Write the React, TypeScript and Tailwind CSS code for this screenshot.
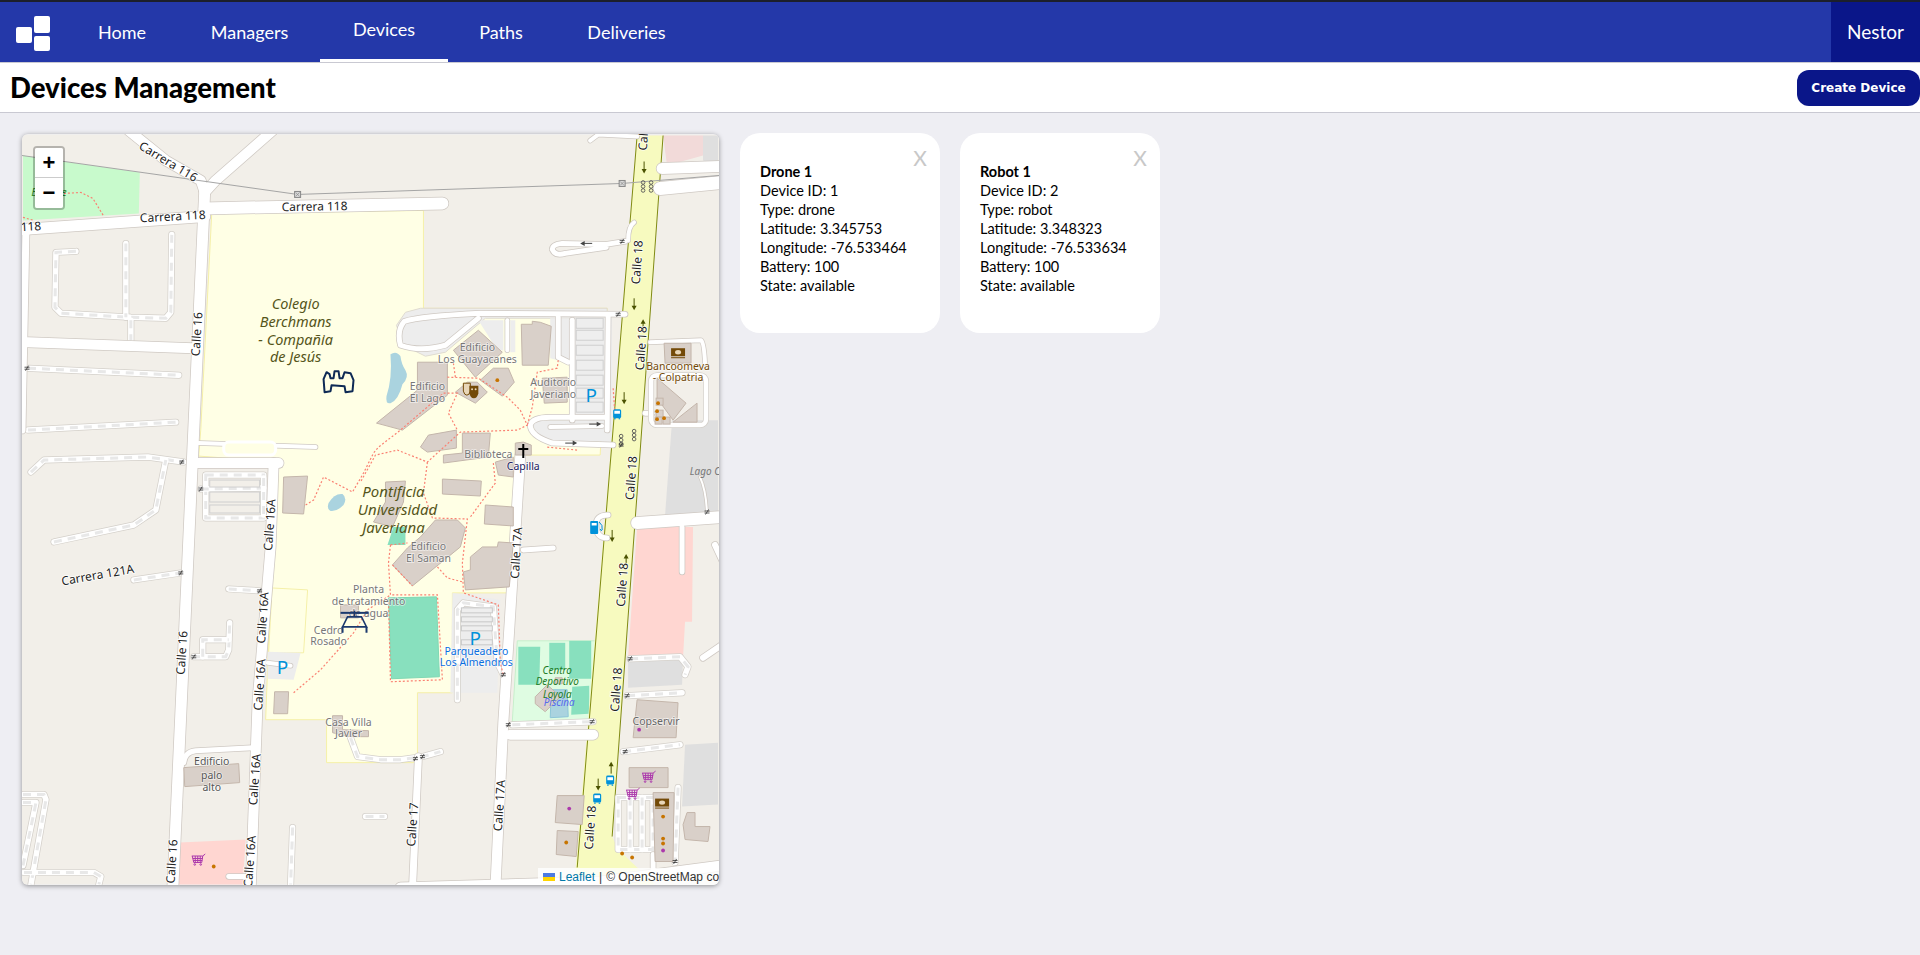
import { Fragment } from "react";

// map geometry is written in page pixels, the viewBox takes care of the offset
const areas: [string, string, string?][] = [
  ["22,155 139,172 138,213 22,220", "#c8facc"],
  ["211,213 423,210 423,308 607,308 600,455 523,455 510,593 452,593 452,693 417,693 417,763 326,763 326,720 265,720 270,588 307,590 303,653 268,653 278,462 198,456 200,430", "#ffffe5", "#f5f0a8"],
  ["179,843 245,840 242,885 176,885", "#ffd6d1"],
  ["663,135 703,135 703,155 667,165", "#f2dad9"],
  ["637,527 693,527 692,622 685,622 683,657 628,657", "#ffd6d1"],
  ["672,420 718,420 718,513 665,515", "#dfdfdf"],
  ["685,745 718,743 718,805 682,807", "#dfdfdf"],
  ["628,662 683,660 682,685 628,688", "#dfdfdf"],
  ["703,135 718,135 718,165 703,160", "#dfdfdf"],
  ["517,641 599,641 593,720 512,722", "#dffce2", "#c8efcc"],
  ["452,593 500,600 497,693 450,693", "#ededed"],
  ["267,652 300,653 293,680 267,679", "#ededed"],
  ["396,325 405,312 420,308 607,308 607,318 485,318 445,352 425,356 403,345", "#ededed", "#e0dcd0"],
  ["478,320 503,320 503,350 497,350", "#ededed"],
  ["510,320 515,320 515,352 510,352", "#ededed"],
  ["550,318 612,318 612,425 570,425 570,363 550,358", "#ededed"],
  ["530,420 612,420 612,442 540,440", "#ededed"],
  ["518,647 540,647 539,685 518,685", "#88e0be"],
  ["549,643 565,643 565,670 549,670", "#88e0be"],
  ["569,641 591,641 591,679 569,679", "#88e0be"],
  ["572,687 589,686 589,714 571,715", "#88e0be"],
  ["388,598 436,597 439,677 391,679", "#88e0be", "#7fd8b4"],
  ["385,482 405,481 403,502 392,527 373,522 385,502", "#d9d0c9", "#c4b6ab"],
  ["393,527 405,527 405,545 387,545", "#88e0be"],
  ["551,690 567,690 568,717 550,718", "#aad3df", "#8ec6d8"],
];

const buildings = [
  "521,324 532,324 532,321 540,322 551,326 548,365 522,365",
  "453,350 478,330 502,352 475,377",
  "480,380 493,368 508,368 514,382 502,396",
  "455,392 467,382 477,382 487,392 475,403",
  "417,362 447,362 447,395 402,430 376,423 417,390",
  "542,378 567,377 567,402 544,403",
  "664,343 691,343 691,363 665,363",
  "657,378 686,403 673,420 657,398",
  "673,422 697,403 697,422",
  "428,435 456,430 456,448 427,452 420,447",
  "462,433 490,433 488,457 443,463 443,455 462,453",
  "495,462 513,457 513,477 498,475",
  "442,479 481,481 480,496 442,494",
  "485,505 513,507 513,526 484,524",
  "407,548 420,537 435,520 457,520 465,528 460,547 412,586 392,565",
  "470,557 482,547 497,547 498,542 513,543 509,587 465,590 463,572 470,570",
  "515,443 523,442 531,445 531,455 515,455",
  "637,700 678,703 676,738 633,738",
  "629,768 668,768 668,788 629,788",
  "557,796 584,796 582,825 555,823",
  "557,831 578,832 576,857 556,855",
  "653,793 674,793 673,862 655,862",
  "687,813 695,813 695,827 710,827 708,842 685,840 683,825",
  "183,768 238,764 239,783 184,787",
  "332,716 342,716 342,730 368,731 368,737 348,737 332,733",
  "283,477 307,476 303,514 282,513",
  "274,692 288,692 287,714 273,714",
  "535,697 547,685 560,697 545,712 535,704",
  "555,678 562,678 562,684 555,684",
  "340,605 358,605 358,618 340,618",
];

// [d, width]
const roads: [string, number][] = [
  ["M204 190 L193 430 L172 890", 11],
  ["M128 130 L165 160 L200 180 L204 192", 10],
  ["M272 130 L215 180 L204 192", 10],
  ["M21 229 L204 216", 11],
  ["M204 208 L442 203", 12],
  ["M27 342 L192 348", 10],
  ["M25 228 L21 430", 7],
  ["M193 463 L278 463", 10],
  ["M273 463 L270 547 L257 700 L250 890", 10],
  ["M520 455 L503 723 L495 890", 10],
  ["M418 757 L412 890", 7],
  ["M510 735 L593 735", 10],
  ["M400 888 L600 882 L722 866", 10],
  ["M662 168 L722 166", 11],
  ["M660 188 L722 182", 13],
  ["M637 523 L722 517", 12],
  ["M682 527 L682 572", 5],
  ["M715 545 L722 560", 6],
  ["M703 658 L722 645", 6],
  ["M590 140 L598 134 L637 136", 4],
  ["M608 515 Q595 515 596 526 Q596 538 607 538", 5],
  ["M650 342 L701 340 Q704 342 705 363", 4],
  ["M645 413 L652 413", 5],
  ["M523 550 L553 548", 5],
  ["M183 763 Q184 752 195 751 L252 748", 5],
  ["M228 877 L245 877", 5],
  ["M267 663 L290 666", 4],
  ["M198 443 L315 447", 4],
  ["M628 240 Q628 226 634 222", 4],
  ["M625 241 L606 244 L562 243 Q552 244 552 249 Q555 256 565 253 L606 247", 5],
  ["M625 314 L480 313 Q420 316 404 321 Q396 330 400 345 Q420 352 445 345 L478 318", 5],
  ["M572 320 L572 420", 5],
  ["M608 315 L607 430", 5],
  ["M558 317 L558 357 L568 362", 5],
  ["M507 320 L507 350", 4],
  ["M613 445 L552 443 Q530 436 530 425 Q532 417 550 417 L605 417", 5],
  ["M550 427 L602 426", 4],
  ["M653 855 L653 873", 5],
  ["M700 477 Q706 490 707 513", 2],
];

const service = [
  "M75 251 L55 252 L54 307 L60 313 L130 317 L165 318 L170 312 L171 234",
  "M125 243 L125 317",
  "M130 320 L130 340",
  "M27 368 L178 375",
  "M27 430 L175 422",
  "M30 472 L43 460 L147 457 L183 462",
  "M53 542 L133 525 L155 510 L165 460",
  "M133 580 L180 573",
  "M205 475 L263 475 L263 518 L205 518 Z",
  "M200 489 L263 488",
  "M228 589 L260 591",
  "M193 657 L225 657 L228 650 L229 623",
  "M202 657 L202 640 L228 640",
  "M22 795 L43 795 L45 800 L30 885",
  "M22 803 L35 803 L22 866",
  "M23 873 L93 873 L100 877 L98 885",
  "M292 828 L290 885",
  "M365 817 L384 817",
  "M350 738 L357 757 L380 760 L400 760 L422 757 L440 752",
  "M457 700 L457 610 L463 603 L493 607 L497 663 L503 675",
  "M512 725 L593 722",
  "M630 659 L680 657 L688 667 L685 675",
  "M627 696 L682 693",
  "M623 752 L680 745",
  "M618 798 L653 798 L653 850 L618 850 Z",
  "M630 798 L630 850",
  "M642 798 L642 850",
  "M678 788 L675 863",
  "M263 478 L263 515",
];

const paths = [
  "M22 217 L33 220 M63 193 L80 192 L92 198 L103 216",
  "M305 505 L313 500 L323 477 L352 492 L363 473 L373 453 L378 447 L400 430 L443 393 L457 393 L448 413 L457 430",
  "M447 377 L478 378 L507 397 L520 410 L527 425 L517 430 L460 432 L427 462 L397 450 L375 455 L360 482",
  "M427 462 L423 493 L432 518 L467 519 L462 563 L463 593 L498 605 L500 663 L503 675",
  "M493 463 L495 483 L470 517",
  "M390 545 L407 543 M390 545 L388 563 L390 595 L437 595 L442 680 L390 682 L388 600",
  "M392 565 L412 586 M437 567 L447 578 L462 582",
  "M293 693 L320 670 L353 633 L367 610 L390 595",
  "M453 363 L455 377",
  "M558 360 L557 368 L537 372 L532 407 L527 425",
  "M613 388 L615 417",
  "M547 447 L577 450",
];

type Label = { t: string; x: number; y: number; r?: number; c?: string; i?: boolean; s?: number };

const road = (t: string, x: number, y: number, r = -86): Label => ({ t, x, y, r });

const labels: Label[] = [
  road("Carrera 116", 167, 162, 31),
  road("Carrera 118", 172, 217, -3),
  road("Carrera 118", 314, 207, -1),
  road("118", 30, 227, -3),
  road("Calle 16", 197, 334),
  road("Calle 16", 182, 653),
  road("Calle 16", 172, 862),
  road("Calle 16A", 270, 525),
  road("Calle 16A", 263, 618),
  road("Calle 16A", 260, 685),
  road("Calle 16A", 255, 780),
  road("Calle 16A", 250, 862),
  road("Calle 18", 645, 128),
  road("Calle 18", 638, 262),
  road("Calle 18", 642, 348),
  road("Calle 18", 632, 478),
  road("Calle 18", 623, 585),
  road("Calle 18", 617, 690),
  road("Calle 18", 591, 828),
  road("Calle 17A", 517, 553),
  road("Calle 17A", 500, 806),
  road("Calle 17", 413, 825),
  road("Carrera 121A", 97, 576, -10),
  { t: "Colegio", x: 295, y: 305, c: "#55551a", i: true, s: 14.5 },
  { t: "Berchmans", x: 295, y: 323, c: "#55551a", i: true, s: 14.5 },
  { t: "- Compañia", x: 295, y: 341, c: "#55551a", i: true, s: 14.5 },
  { t: "de Jesús", x: 295, y: 358, c: "#55551a", i: true, s: 14.5 },
  { t: "Pontificia", x: 393, y: 493, c: "#55551a", i: true, s: 15 },
  { t: "Universidad", x: 397, y: 511, c: "#55551a", i: true, s: 15 },
  { t: "Javeriana", x: 393, y: 529, c: "#55551a", i: true, s: 15 },
  { t: "Edificio", x: 477, y: 348, c: "#777" },
  { t: "Los Guayacanes", x: 477, y: 360, c: "#777" },
  { t: "Edificio", x: 427, y: 387, c: "#777" },
  { t: "El Lago", x: 427, y: 399, c: "#777" },
  { t: "Auditorio", x: 553, y: 383, c: "#777" },
  { t: "Javeriano", x: 553, y: 395, c: "#777" },
  { t: "Biblioteca", x: 488, y: 455, c: "#777" },
  { t: "Capilla", x: 523, y: 467, c: "#20205f" },
  { t: "Edificio", x: 428, y: 547, c: "#777" },
  { t: "El Saman", x: 428, y: 559, c: "#777" },
  { t: "Planta", x: 368, y: 590, c: "#777" },
  { t: "de tratamiento", x: 368, y: 602, c: "#777" },
  { t: "de agua", x: 368, y: 614, c: "#777" },
  { t: "Cedro", x: 328, y: 631, c: "#777" },
  { t: "Rosado", x: 328, y: 642, c: "#777" },
  { t: "Parqueadero", x: 476, y: 652, c: "#0a6fe0" },
  { t: "Los Almendros", x: 476, y: 663, c: "#0a6fe0" },
  { t: "Centro", x: 557, y: 672, c: "#1b7b25", i: true, s: 10 },
  { t: "Deportivo", x: 557, y: 683, c: "#1b7b25", i: true, s: 10 },
  { t: "Loyola", x: 557, y: 696, c: "#1b7b25", i: true, s: 10 },
  { t: "Piscina", x: 559, y: 704, c: "#5768ec", i: true, s: 10 },
  { t: "Copservir", x: 656, y: 722, c: "#666" },
  { t: "Bancoomeva", x: 678, y: 367, c: "#734a08" },
  { t: "- Colpatria", x: 678, y: 378, c: "#734a08" },
  { t: "Lago Club", x: 712, y: 472, c: "#777", i: true, s: 10 },
  { t: "Casa Villa", x: 348, y: 723, c: "#777" },
  { t: "Javier", x: 348, y: 735, c: "#777" },
  { t: "Edificio", x: 211, y: 763, c: "#555" },
  { t: "palo", x: 211, y: 777, c: "#555" },
  { t: "alto", x: 211, y: 789, c: "#555" },
  { t: "Bosque", x: 48, y: 193, c: "#2b8a2b", i: true, s: 11 },
];

const gates: [number, number][] = [
  [181, 462], [200, 489], [180, 573], [259, 591], [193, 657], [508, 725], [592, 722],
  [630, 659], [627, 696], [503, 675], [707, 512], [622, 241], [618, 314], [621, 445],
  [26, 368], [625, 752], [675, 862], [415, 759], [422, 757],
];

const arrows: [number, number, number][] = [
  [644, 167, 90], [634, 304, 90], [643, 325, -90], [624, 398, 90], [612, 536, 90],
  [626, 560, -90], [598, 785, 90], [611, 768, -90], [586, 243, 180], [595, 424, 0], [571, 443, 0],
];

const dots: [number, number, string][] = [
  [497, 380, "#c77400"], [658, 403, "#c77400"], [657, 411, "#c77400"], [664, 418, "#c77400"], [657, 419, "#c77400"],
  [213, 867, "#c77400"], [566, 843, "#c77400"], [622, 854, "#c77400"], [632, 858, "#c77400"],
  [663, 817, "#c77400"], [663, 839, "#c77400"], [663, 844, "#c77400"], [663, 851, "#ac39ac"],
  [639, 730, "#ac39ac"], [569, 809, "#ac39ac"],
];

function Cart({ x, y }: { x: number; y: number }) {
  return (
    <g transform={`translate(${x - 7} ${y - 6})`} fill="none" stroke="#ac39ac" strokeWidth="1">
      <path d="M0 1.5 H11 L13.5 -0.5 M0.5 1.5 L2 8 H10 L11 1.5 M1 4 H11 M1.5 6 H10.5 M3.5 1.5 V8 M6 1.5 V8 M8.5 1.5 V8" />
      <circle cx="3" cy="10" r="0.8" />
      <circle cx="9" cy="10" r="0.8" />
    </g>
  );
}

function Bus({ x, y }: { x: number; y: number }) {
  return (
    <g transform={`translate(${x - 4} ${y - 5})`}>
      <rect width="8" height="9" rx="1.5" fill="#0092da" />
      <rect x="1.2" y="1.6" width="5.6" height="3" fill="#fff" />
      <rect x="1" y="9" width="1.5" height="1.2" fill="#0092da" />
      <rect x="5.5" y="9" width="1.5" height="1.2" fill="#0092da" />
    </g>
  );
}

function Bank({ x, y }: { x: number; y: number }) {
  return (
    <g transform={`translate(${x - 7} ${y - 5})`}>
      <rect width="14" height="8" fill="#734a08" />
      <ellipse cx="7" cy="4" rx="3" ry="2.2" fill="#e8d6b8" />
      <rect y="9" width="14" height="1" fill="#734a08" />
    </g>
  );
}

function MapArt() {
  return (
    <svg viewBox="21 134 698 751" className="block h-full w-full font-['Noto_Sans']">
      <rect x="21" y="134" width="698" height="751" fill="#f2efe9" />
      {areas.map(([points, fill, stroke], i) => (
        <polygon key={i} points={points} fill={fill} stroke={stroke ?? "none"} />
      ))}
      {/* ponds */}
      <path d="M390 354 Q396 350 400 356 Q401 364 405 370 Q409 377 402 384 Q398 400 390 403 Q385 404 386 396 Q392 378 390 354 Z" fill="#aad3df" />
      <path d="M328 503 Q334 493 342 494 Q347 498 343 505 Q336 512 330 511 Q326 509 328 503 Z" fill="#aad3df" />
      <polygon points="637,135 663,135 612,837 618,850 655,885 574,885" fill="#f7fabf" />
      <path d="M637 135 L577 868 M663 135 L612 837" stroke="#7f8a12" fill="none" />

      {service.map((d) => (
        <path key={d} d={d} fill="none" stroke="#d4d0ca" strokeWidth="7" strokeLinecap="round" strokeLinejoin="round" />
      ))}
      {service.map((d) => (
        <Fragment key={d}>
          <path d={d} fill="none" stroke="#fff" strokeWidth="5.5" strokeLinecap="round" strokeLinejoin="round" />
          <path d={d} fill="none" stroke="#e8e8e8" strokeWidth="3" strokeDasharray="8 6" />
        </Fragment>
      ))}

      {roads.map(([d, w]) => (
        <path key={d} d={d} fill="none" stroke="#cfc9c3" strokeWidth={w + 1.5} strokeLinecap="round" strokeLinejoin="round" />
      ))}
      {roads.map(([d, w]) => (
        <path key={d} d={d} fill="none" stroke="#fff" strokeWidth={w} strokeLinecap="round" strokeLinejoin="round" />
      ))}

      {/* parking rows */}
      {[318, 330, 345, 360, 375, 388, 402].map((y) => (
        <rect key={y} x="576" y={y} width="27" height="10" fill="#eeeeee" stroke="#cfcfcf" />
      ))}
      {[608, 617, 626, 640].map((y) => (
        <rect key={y} x="461" y={y} width="31" height="5" fill="#eeeeee" stroke="#c8c8c8" />
      ))}
      <rect x="209" y="480" width="50" height="7" fill="#f2efe9" stroke="#cfcfcf" />
      <rect x="209" y="492" width="50" height="10" fill="#f2efe9" stroke="#cfcfcf" />
      <rect x="209" y="505" width="50" height="8" fill="#f2efe9" stroke="#cfcfcf" />
      <rect x="223" y="442" width="52" height="13" rx="5" fill="#ffffe5" stroke="#fff" strokeWidth="3" />
      <rect x="651" y="375" width="55" height="50" rx="6" fill="none" stroke="#d4d0ca" strokeWidth="6" />
      <rect x="651" y="375" width="55" height="50" rx="6" fill="none" stroke="#fff" strokeWidth="4.5" />

      {buildings.map((points) => (
        <polygon key={points} points={points} fill="#d9d0c9" stroke="#c4b6ab" />
      ))}
      {[[656, 398], [656, 410], [663, 417], [655, 417]].map(([x, y]) => (
        <rect key={`${x}-${y}`} x={x} y={y} width="7" height="7" fill="#d9d0c9" stroke="#c4b6ab" />
      ))}

      {paths.map((d) => (
        <path key={d} d={d} fill="none" stroke="#fa8072" strokeWidth="1.2" strokeDasharray="2 2" />
      ))}

      {/* power line */}
      <path d="M21 155 L297 194 L622 183 L719 175" fill="none" stroke="#a5a5a5" />
      {[[297, 194], [622, 183]].map(([x, y]) => (
        <g key={x}>
          <rect x={x - 3} y={y - 3} width="6" height="6" fill="#d8d8d8" stroke="#888" />
          <path d={`M${x - 2} ${y - 2} L${x + 2} ${y + 2} M${x + 2} ${y - 2} L${x - 2} ${y + 2}`} stroke="#888" strokeWidth="0.7" />
        </g>
      ))}

      {/* traffic signals */}
      {[[643, 186], [651, 186], [621, 440], [634, 435]].map(([x, y]) => (
        <g key={`${x}-${y}`} fill="none" stroke="#555" strokeWidth="0.9">
          <circle cx={x} cy={y - 4} r="1.8" />
          <circle cx={x} cy={y} r="1.8" />
          <circle cx={x} cy={y + 4} r="1.8" />
        </g>
      ))}

      {gates.map(([x, y]) => (
        <path key={`${x}-${y}`} d={`M${x - 2.5} ${y - 1} H${x + 2.5} M${x - 2.5} ${y + 1} H${x + 2.5} M${x + 1.5} ${y - 2.5} L${x - 1.5} ${y + 2.5}`} stroke="#333" strokeWidth="0.8" fill="none" />
      ))}

      {arrows.map(([x, y, r]) => (
        <g key={`${x}-${y}`} transform={`translate(${x} ${y}) rotate(${r})`}>
          <path d="M-6 0 H4" stroke={r === 0 || r === 180 ? "#444" : "#4a5200"} />
          <path d="M6 0 L1.5 -2.5 V2.5 Z" fill={r === 0 || r === 180 ? "#444" : "#4a5200"} />
        </g>
      ))}

      {dots.map(([x, y, c]) => (
        <circle key={`${x}-${y}`} cx={x} cy={y} r="1.9" fill={c} />
      ))}

      {/* theatre masks */}
      <g transform="translate(463 383)">
        <path d="M0 0 H7 V8 Q6 12 3.5 12 Q1 12 0 8 Z" fill="#e8d6b8" stroke="#734a08" />
        <path d="M6 2.5 H15 V10 Q14 15 10.5 15 Q7 15 6 10 Z" fill="#734a08" />
        <circle cx="8.7" cy="6" r="1" fill="#e8d6b8" />
        <circle cx="12.3" cy="6" r="1" fill="#e8d6b8" />
      </g>

      <Bank x={678} y={353} />
      <Bank x={662} y={804} />
      <Bus x={617} y={414} />
      <Bus x={610} y={781} />
      <Bus x={597} y={799} />
      <Cart x={198} y={861} />
      <Cart x={649} y={778} />
      <Cart x={633} y={795} />

      {/* fuel */}
      <g transform="translate(590 521)">
        <rect width="8" height="13" rx="1" fill="#0092da" />
        <rect x="1.5" y="2" width="5" height="2.5" fill="#fff" />
        <path d="M9 1 Q13 4 12 9 Q11 11 10 8" fill="none" stroke="#0092da" />
      </g>

      {/* chapel cross */}
      <path d="M523 444 V458 M518 449 H528" stroke="#000" strokeWidth="2" />

      <text x="591" y="402" textAnchor="middle" fontSize="19" fill="#0092da">P</text>
      <text x="282" y="674" textAnchor="middle" fontSize="19" fill="#0092da">P</text>
      <text x="475" y="645" textAnchor="middle" fontSize="19" fill="#0092da">P</text>

      {labels.map((l, i) => (
        <text
          key={i}
          textAnchor="middle"
          dominantBaseline="middle"
          transform={`translate(${l.x} ${l.y}) rotate(${l.r ?? 0})`}
          fontSize={l.s ?? (l.c ? 10.5 : 12)}
          fontStyle={l.i ? "italic" : "normal"}
          fill={l.c ?? "#222"}
          stroke={l.i ? "none" : "#ffffff"}
          strokeOpacity={l.c ? 0.6 : 0.9}
          strokeWidth="1.6"
          paintOrder="stroke"
        >
          {l.t}
        </text>
      ))}

      {/* device markers */}
      <g fill="none" stroke="#0e2a55" strokeWidth="2" strokeLinejoin="round">
        <path d="M324 392 L323 379 L326 372 L329 374 L330 378 L333 378 L334 371 L338 371 L339 378 L342 378 L344 372 L350 373 L353 380 L352 391 L345 392 L344 386 L331 385 L330 391 Z" />
      </g>
      <g fill="none" stroke="#1c3a6e" strokeWidth="1.6">
        <path d="M340 613 H368" strokeWidth="2" />
        <path d="M354 611 V617 M347 617 H361 L366 627 H342 Z" />
        <path d="M342 627 L342 633 M366 627 L366 633" strokeWidth="2" />
      </g>
    </svg>
  );
}

const navItems = [
  { label: "Home", width: "w-[114px]" },
  { label: "Managers", width: "w-[141px]" },
  { label: "Devices", width: "w-[128px]" },
  { label: "Paths", width: "w-[106px]" },
  { label: "Deliveries", width: "w-[145px]" },
];

const devices = [
  { name: "Drone 1", id: 1, type: "drone", lat: "3.345753", lng: "-76.533464" },
  { name: "Robot 1", id: 2, type: "robot", lat: "3.348323", lng: "-76.533634" },
];

function DeviceCard({ device }: { device: (typeof devices)[number] }) {
  return (
    <div className="relative h-[200px] w-[200px] whitespace-nowrap rounded-[20px] bg-white px-5 pt-[29px] text-[14.5px] leading-[19px] text-black">
      <span className="absolute right-[13px] top-[12px] text-[21px] leading-[25px] text-[#c8c8c8]">X</span>
      <div className="font-bold">{device.name}</div>
      <div>Device ID: {device.id}</div>
      <div>Type: {device.type}</div>
      <div>Latitude: {device.lat}</div>
      <div>Longitude: {device.lng}</div>
      <div>Battery: 100</div>
      <div>State: available</div>
    </div>
  );
}

export default function App() {
  return (
    <div className="flex min-h-screen flex-col bg-[#eeeef3] font-[Lato]">
      <nav className="flex h-[63px] border-t-2 border-b border-t-[#1c1f2b] border-b-[#c9c9d2] bg-[#2438a9] text-white">
        <div className="flex w-[65px] items-center">
          <svg viewBox="0 0 65 60" className="h-[60px] w-[65px]">
            <rect x="16" y="25" width="16" height="16" rx="2" fill="#fff" />
            <rect x="34" y="14" width="16" height="17" rx="2" fill="#fff" />
            <rect x="34" y="34" width="16" height="15" rx="2" fill="#fff" />
          </svg>
        </div>
        {navItems.map((item) =>
          item.label === "Devices" ? (
            <a key={item.label} className={`flex items-center justify-center border-b-[3px] border-white pb-[2px] text-[18px] ${item.width}`}>
              {item.label}
            </a>
          ) : (
            <a key={item.label} className={`flex items-center justify-center text-[18px] ${item.width}`}>
              {item.label}
            </a>
          ),
        )}
        <div className="ml-auto flex w-[89px] items-center justify-center bg-[#0a1689] text-[19px]">Nestor</div>
      </nav>

      <div className="flex h-[50px] items-center justify-between border-b border-[#c9c9d2] bg-white pl-[10px]">
        <h1 className="text-[27.5px] font-black text-black">Devices Management</h1>
        <button className="h-9 w-[123px] rounded-xl bg-[#0a1689] font-['DejaVu_Sans'] text-[12px] font-bold text-white">
          Create Device
        </button>
      </div>

      <main className="flex items-start gap-[21px] pl-[22px] pt-[21px]">
        <div className="relative h-[751px] w-[697px] overflow-hidden rounded-[6px] shadow-[0_1px_5px_rgba(0,0,0,0.4)]">
          <MapArt />
          <div className="absolute left-[11px] top-[12px] w-[32px] rounded-[4px] border-2 border-[rgba(0,0,0,0.25)] bg-clip-padding font-['Liberation_Sans']">
            <div className="flex h-[30px] items-center justify-center rounded-t-[2px] border-b border-[#ccc] bg-white text-[22px] font-bold leading-none text-black">+</div>
            <div className="flex h-[30px] items-center justify-center rounded-b-[2px] bg-white text-[22px] font-bold leading-none text-black">−</div>
          </div>
          <div className="absolute bottom-0 right-0 flex h-[17px] w-[181px] items-center overflow-hidden whitespace-nowrap bg-white/80 pl-[5px] font-['Liberation_Sans'] text-[12px] text-[#333]">
            <svg viewBox="0 0 12 8" className="mr-1 h-2 w-3 shrink-0">
              <rect width="12" height="4" fill="#4C7BE1" />
              <rect y="4" width="12" height="4" fill="#FFD500" />
            </svg>
            <span className="text-[#0078a8]">Leaflet</span>
            <span className="mx-1">|</span>
            <span>© OpenStreetMap contributors</span>
          </div>
        </div>
        <div className="-mt-px flex gap-5">
          {devices.map((d) => (
            <DeviceCard key={d.id} device={d} />
          ))}
        </div>
      </main>
    </div>
  );
}
